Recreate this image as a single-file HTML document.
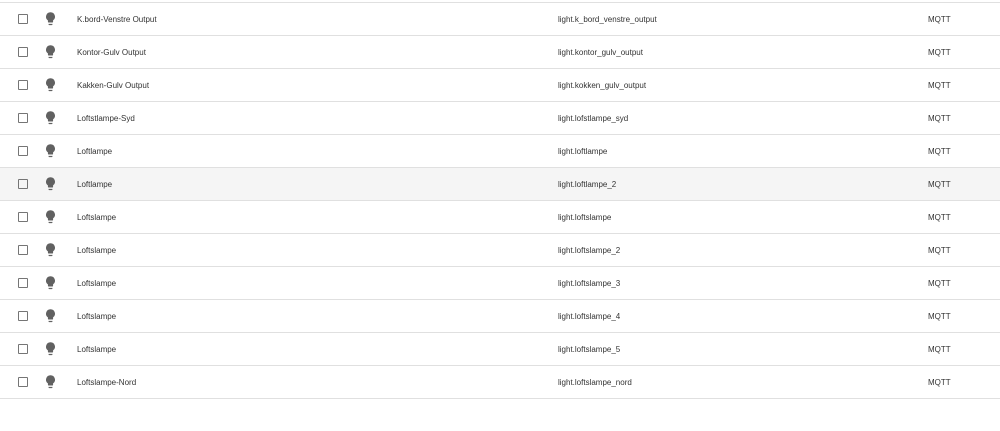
<!DOCTYPE html><html><head><style>
body{margin:0;background:#fff;width:1000px;height:400px;overflow:hidden;font-family:"Liberation Sans",sans-serif;font-size:8px;color:#333}
.r{position:absolute;left:0;width:1000px;height:32px;border-top:1px solid #e0e0e0}
.r.h{background:#f5f5f5}
.cb{position:absolute;left:18px;top:11px;width:8px;height:8px;border:1.5px solid #757575;border-radius:1px}
.b{position:absolute;left:46px;top:9px}
.t{position:absolute;top:12px;line-height:10px}
</style></head><body>
<div id="c"></div>
<script>
var d=[["K.bord-Venstre Output","light.k_bord_venstre_output"],["Kontor-Gulv Output","light.kontor_gulv_output"],["Kakken-Gulv Output","light.kokken_gulv_output"],["Loftstlampe-Syd","light.lofstlampe_syd"],["Loftlampe","light.loftlampe"],["Loftlampe","light.loftlampe_2"],["Loftslampe","light.loftslampe"],["Loftslampe","light.loftslampe_2"],["Loftslampe","light.loftslampe_3"],["Loftslampe","light.loftslampe_4"],["Loftslampe","light.loftslampe_5"],["Loftslampe-Nord","light.loftslampe_nord"]];
var h="";d.forEach(function(x,i){h+='<div class="r'+(i==5?' h':'')+'" style="top:'+(2+33*i)+'px"><div class="cb"></div><svg class="b" width="9" height="14" viewBox="5 2 14 21"><path fill="#616161" d="M12 2a7 7 0 0 0-4 12.7V17a1 1 0 0 0 1 1h6a1 1 0 0 0 1-1v-2.3A7 7 0 0 0 12 2zM9 21a1 1 0 0 0 1 1h4a1 1 0 0 0 1-1v-1H9v1z"/></svg><div class="t" style="left:77px">'+x[0]+'</div><div class="t" style="left:558px">'+x[1]+'</div><div class="t" style="left:928px">MQTT</div></div>'});
h+='<div class="r" style="top:398px"></div>';
document.getElementById("c").innerHTML=h;
</script></body></html>
